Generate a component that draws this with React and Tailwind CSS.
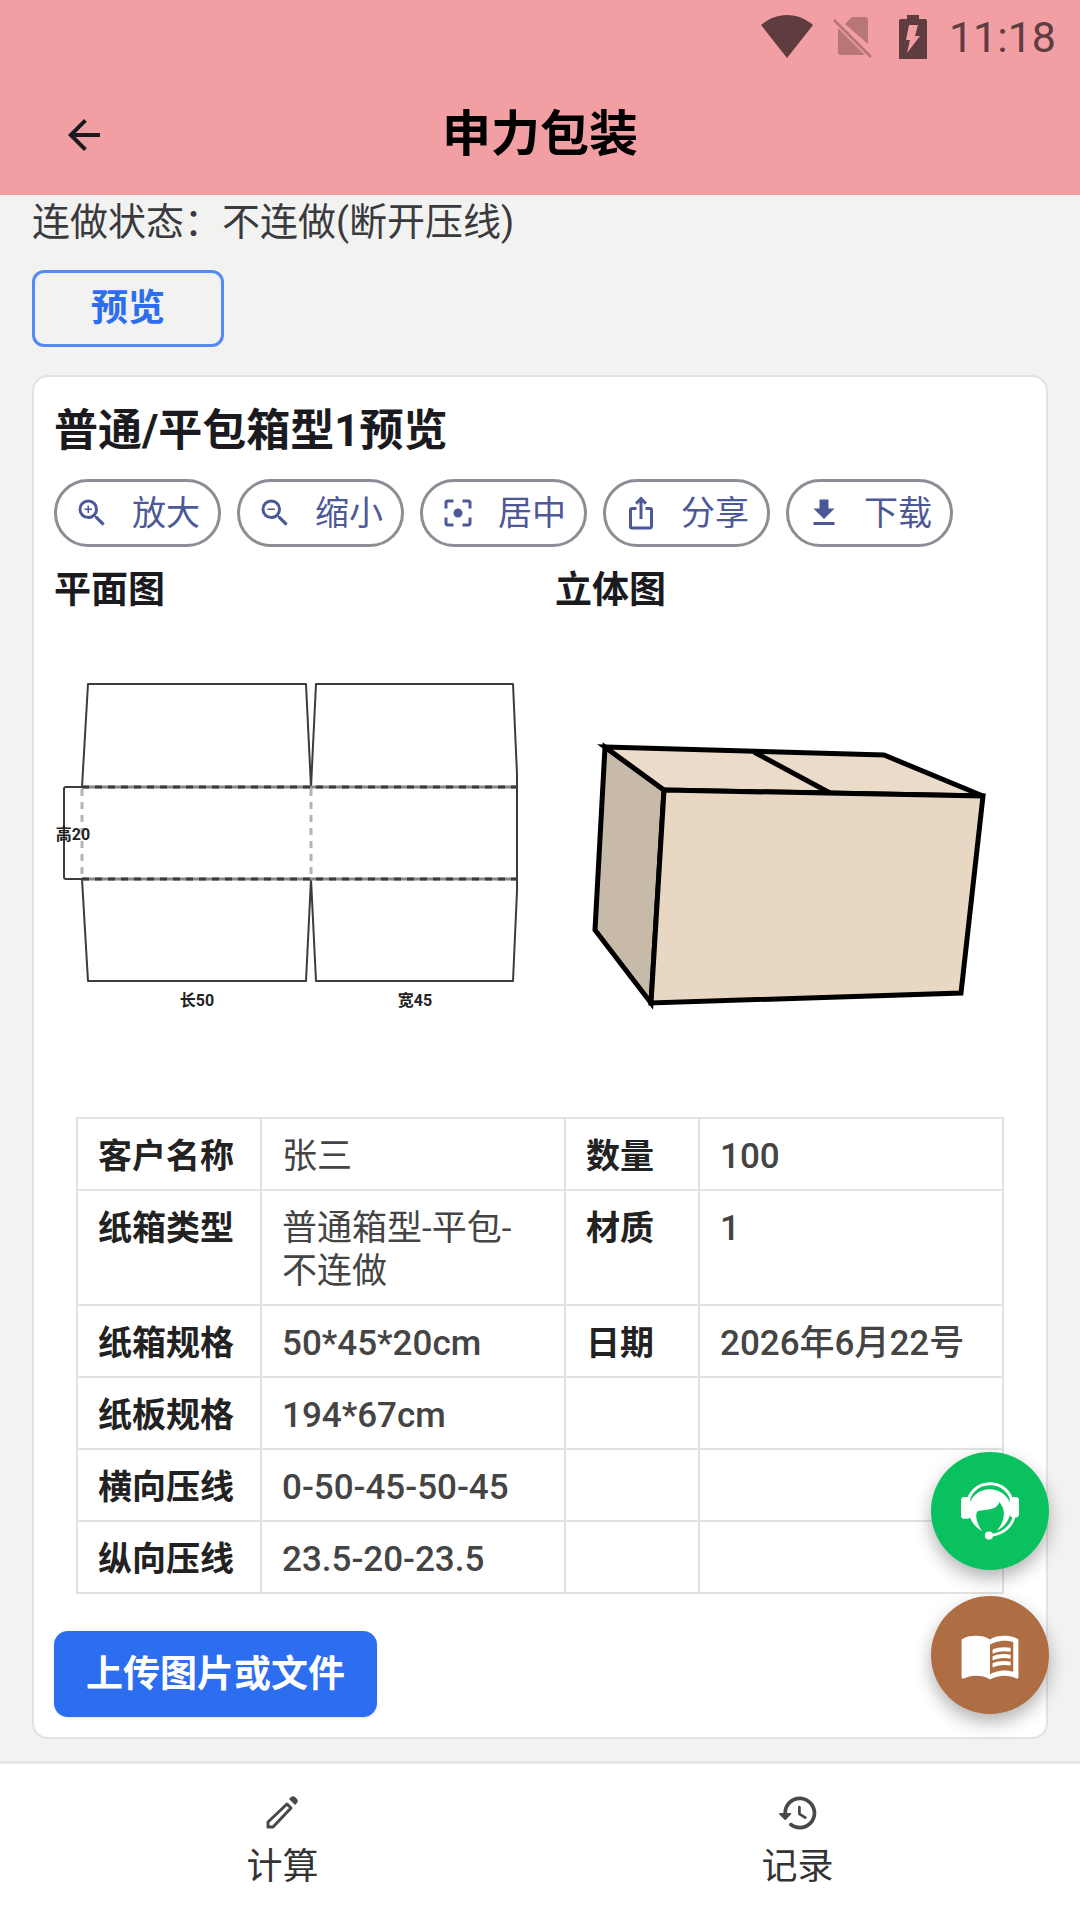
import {
  MdArrowBack,
  MdFileDownload,
  MdFilterCenterFocus,
  MdIosShare,
  MdMenuBook,
  MdZoomIn,
  MdZoomOut,
} from 'react-icons/md';

const tools = [
  { name: '放大', icon: MdZoomIn },
  { name: '缩小', icon: MdZoomOut },
  { name: '居中', icon: MdFilterCenterFocus },
  { name: '分享', icon: MdIosShare },
  { name: '下载', icon: MdFileDownload },
];

const rows = [
  ['客户名称', '张三', '数量', '100'],
  ['纸箱类型', '普通箱型-平包-不连做', '材质', '1'],
  ['纸箱规格', '50*45*20cm', '日期', '2026年6月22号'],
  ['纸板规格', '194*67cm', '', ''],
  ['横向压线', '0-50-45-50-45', '', ''],
  ['纵向压线', '23.5-20-23.5', '', ''],
];

function StatusBar() {
  return (
    <div className="flex h-[74px] items-center justify-end pr-6 text-[#5f3c3f]">
      <svg width="52" height="44" viewBox="0 0 52 44" fill="currentColor" aria-hidden="true">
        <path d="M26 43 0 10C7 4 16 0 26 0s19 4 26 10z" />
      </svg>
      <svg className="ml-5 text-[#b87679]" width="40" height="44" viewBox="0 0 40 44" aria-hidden="true">
        <path d="M19 2h13a3 3 0 0 1 3 3v24L12 9z" fill="currentColor" />
        <path d="M5 13v24a3 3 0 0 0 3 3h24z" fill="currentColor" />
        <path d="m1 5 37 37" stroke="currentColor" strokeWidth="3" />
      </svg>
      <svg className="ml-[26px]" width="28" height="44" viewBox="0 0 28 44" aria-hidden="true">
        <path d="M8 0h12v4h6a2 2 0 0 1 2 2v38H0V6a2 2 0 0 1 2-2h6z" fill="currentColor" />
        <path d="M10 10h9l-3 11h5L8 38l3-13H7z" fill="#f19fa3" />
      </svg>
      <span className="ml-[22px] text-[43px] leading-none">11:18</span>
    </div>
  );
}

function FlatDrawing() {
  return (
    <svg viewBox="0 0 471 480" className="h-auto w-full" role="img" aria-label="平面图">
      <g fill="none" stroke="#3c3c3c" strokeWidth="2" strokeLinejoin="round">
        <path d="M28 172 34 69h218l5 103" />
        <path d="m257 172 5-103h197l4 90v13" />
        <path d="m28 264 6 102h218l5-102" />
        <path d="m257 264 5 102h197l4-90v-12" />
        <path d="M28 172h435M28 264h435" stroke="#888" strokeWidth="3" />
        <path d="M28 172H12a2 2 0 0 0-2 2v88a2 2 0 0 0 2 2h16M463 172v92" />
        <path d="M28 172h435M28 264h435" strokeWidth="3" strokeDasharray="7 6" />
      </g>
      <g fill="none" stroke="#b4b4b4" strokeWidth="3" strokeDasharray="7 6">
        <path d="M28 174v90" />
        <path d="M257 174v90" />
      </g>
      <g fontSize="16" fontWeight="700" textAnchor="middle" fill="#222">
        <text x="19" y="225">高20</text>
        <text x="143" y="391">长50</text>
        <text x="361" y="391">宽45</text>
      </g>
    </svg>
  );
}

function BoxDrawing() {
  return (
    <svg viewBox="0 0 471 480" className="h-auto w-full" role="img" aria-label="立体图">
      <g stroke="#000" strokeWidth="5" strokeLinejoin="miter">
        <path d="m50 132 59 43-13 213-56-73z" fill="#c7baa9" />
        <path d="m50 132 279 8 99 41-319-6z" fill="#ebdcc9" />
        <path d="m109 175 319 6-22 197-310 10z" fill="#e8d8c3" />
        <path d="m199 137 76 41" />
      </g>
    </svg>
  );
}

function AgentIcon() {
  return (
    <svg width="58" height="58" viewBox="0 0 170 170" aria-hidden="true">
      <path d="M21 64a64 59 0 0 1 128 0" fill="none" stroke="#fff" strokeWidth="9" />
      <path
        d="M24 66C33 36 58 21 84 21s52 15 62 45v19c-5 29-18 46-40 57 17-21 24-45 17-66l-10-18c-4 12-13 20-29 22l-34 5c-10 6-6 34 12 59-18-10-31-24-37-44z"
        fill="#fff"
      />
      <rect x="0" y="44" width="27" height="64" rx="10" fill="#fff" />
      <rect x="143" y="44" width="27" height="60" rx="10" fill="#fff" />
      <path d="M156 100c-8 34-38 55-72 56" fill="none" stroke="#fff" strokeWidth="8" />
      <circle cx="82" cy="157" r="12" fill="#fff" />
    </svg>
  );
}

function PencilIcon() {
  return (
    <svg width="44" height="44" viewBox="0 0 44 44" aria-hidden="true">
      <path d="M7 36v-5l19-18 4 4-18 19z" fill="none" stroke="#484848" strokeWidth="3" strokeLinejoin="round" />
      <path d="m28 8 2-2c1-1 3-1 4 0l2 2c1 1 1 3 0 4l-2 2z" fill="#484848" />
    </svg>
  );
}

function HistoryIcon() {
  return (
    <svg width="44" height="44" viewBox="0 0 24 24" fill="#484848" aria-hidden="true">
      <path d="M13.26 3C8.17 2.86 4 6.95 4 12H2.21c-.45 0-.67.54-.35.85l2.79 2.8c.2.2.51.2.71 0l2.79-2.8c.31-.31.09-.85-.36-.85H6c0-3.9 3.18-7.05 7.1-7 3.72.05 6.85 3.18 6.9 6.9.05 3.91-3.1 7.1-7 7.1-1.61 0-3.1-.55-4.28-1.48-.4-.31-.96-.28-1.32.08-.42.42-.39 1.13.08 1.49C9 20.29 10.91 21 13 21c5.05 0 9.14-4.17 9-9.26-.13-4.69-4.05-8.61-8.74-8.74zm-.51 5c-.41 0-.75.34-.75.75v3.68c0 .35.19.68.49.86l3.12 1.85c.36.21.82.09 1.03-.26.21-.36.09-.82-.26-1.03l-2.88-1.71v-3.4c0-.4-.34-.74-.75-.74z" />
    </svg>
  );
}

function LabelCell({ children }) {
  return (
    <th className="border-2 border-[#e2e2e2] pt-4 pb-[11px] pl-5 text-[34px] font-bold whitespace-nowrap text-[#222]">
      {children}
    </th>
  );
}

function ValueCell({ text }) {
  // numbers are set a little heavier than names
  const weight = /^\d/.test(text) ? 'font-medium' : 'font-normal';
  return <td className={`border-2 border-[#e2e2e2] px-5 pt-4 pb-[11px] text-[#444] ${weight}`}>{text}</td>;
}

export default function App() {
  return (
    <div className="flex min-h-screen flex-col bg-[#f2f2f0] font-[Roboto,'Noto_Sans_CJK_SC',sans-serif] text-[#1b1b1f]">
      <header className="bg-[#f19fa3]">
        <StatusBar />
        <div className="grid h-[121px] grid-cols-[1fr_auto_1fr] items-center px-[60px]">
          <button type="button" aria-label="返回" className="justify-self-start">
            <MdArrowBack className="size-12" />
          </button>
          <h1 className="text-[49px] leading-none font-bold text-black">申力包装</h1>
        </div>
      </header>

      <main className="flex-1 px-8 pt-[3px] pb-5">
        <p className="text-[38px] leading-[48px] text-[#3a3a3e]">连做状态：不连做(断开压线)</p>
        <button
          type="button"
          className="mt-6 h-[77px] w-48 rounded-xl border-3 border-[#5589f3] text-[37px] leading-none font-bold text-[#2d6def]"
        >
          预览
        </button>

        <section className="mt-7 rounded-2xl border-2 border-[#e2e2e2] bg-white px-5 pt-[26px] pb-5">
          <h2 className="text-[44px] leading-[56px] font-bold">普通/平包箱型1预览</h2>

          <div className="mt-5 flex flex-wrap gap-4">
            {tools.map((tool) => (
              <button
                key={tool.name}
                type="button"
                className="flex h-[68px] items-center gap-[22px] rounded-full border-3 border-[#8d8d95] pr-[18px] pl-[17px] text-[34px] leading-none text-[#4c5897]"
              >
                <tool.icon className="size-9" />
                {tool.name}
              </button>
            ))}
          </div>

          <div className="mt-5 grid grid-cols-2 gap-[30px]">
            <div>
              <h3 className="text-[37px] leading-[48px] font-bold">平面图</h3>
              <FlatDrawing />
            </div>
            <div>
              <h3 className="text-[37px] leading-[48px] font-bold">立体图</h3>
              <BoxDrawing />
            </div>
          </div>

          <div className="mt-[22px] px-[22px]">
            <table className="w-full table-fixed border-collapse text-left text-[35px] leading-[43px]">
              <colgroup>
                <col className="w-[184px]" />
                <col />
                <col className="w-[134px]" />
                <col />
              </colgroup>
              <tbody>
                {rows.map(([label, value, label2, value2]) => (
                  <tr key={label} className="align-top">
                    <LabelCell>{label}</LabelCell>
                    <ValueCell text={value} />
                    <LabelCell>{label2}</LabelCell>
                    <ValueCell text={value2} />
                  </tr>
                ))}
              </tbody>
            </table>
          </div>

          <button
            type="button"
            className="mt-[37px] flex h-[86px] items-center rounded-[14px] bg-[#2d6def] px-8 text-[37px] leading-none font-bold text-white shadow-sm"
          >
            上传图片或文件
          </button>
        </section>
      </main>

      <nav className="flex h-[159px] border-t-3 border-[#e6e7e7] bg-white px-[25px] pt-[27px]">
        <a href="#calc" className="flex flex-1 flex-col items-center gap-2 text-[36px] leading-[48px] text-[#333]">
          <PencilIcon />
          计算
        </a>
        <a href="#records" className="flex flex-1 flex-col items-center gap-2 text-[36px] leading-[48px] text-[#333]">
          <HistoryIcon />
          记录
        </a>
      </nav>

      {/* floating actions */}
      <div className="fixed right-[31px] bottom-[206px] flex flex-col gap-[26px]">
        <button
          type="button"
          aria-label="客服"
          className="flex size-[118px] items-center justify-center rounded-full bg-[#0ac160] shadow-[0_8px_18px_rgba(0,0,0,0.3)]"
        >
          <AgentIcon />
        </button>
        <button
          type="button"
          aria-label="说明"
          className="flex size-[118px] items-center justify-center rounded-full bg-[#af6d43] text-white shadow-[0_8px_18px_rgba(0,0,0,0.3)]"
        >
          <MdMenuBook className="size-[62px]" />
        </button>
      </div>
    </div>
  );
}
